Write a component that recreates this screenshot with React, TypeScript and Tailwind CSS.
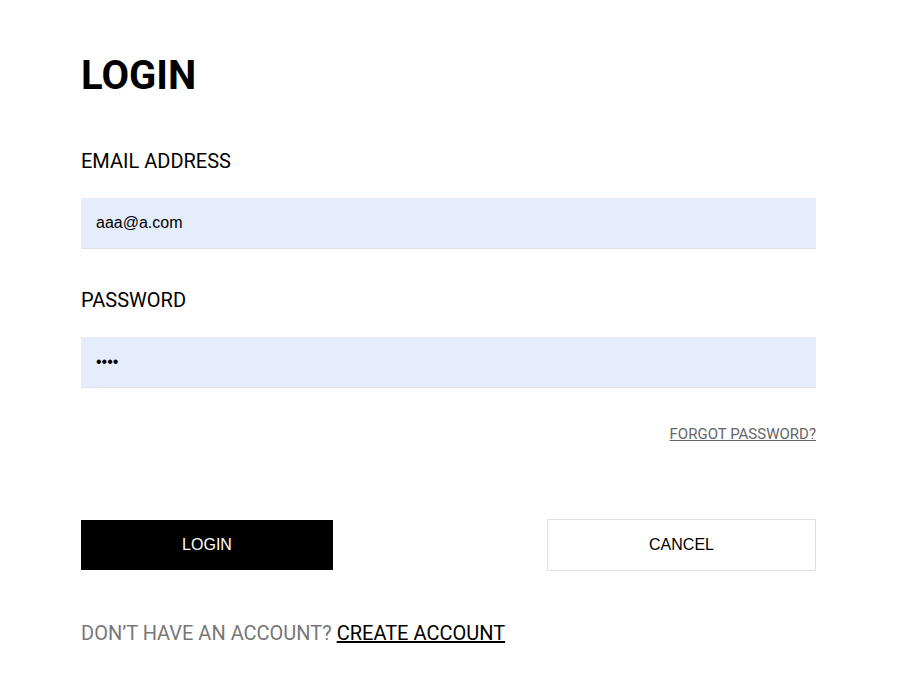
export default function App() {
  return (
    <div className="min-h-[698px] bg-white font-['Roboto',sans-serif]">
      <div className="ml-[81px] w-[735px] pt-[52px]">
        <h1 className="text-[40px] font-bold leading-[48px] text-black">LOGIN</h1>

        <form className="mt-[49px]" onSubmit={(e) => e.preventDefault()}>
          <label className="block text-[20px] leading-[24px] text-black">EMAIL ADDRESS</label>
          <input
            type="email"
            defaultValue="aaa@a.com"
            className="mt-[25px] block h-[51px] w-full border-b border-[#e2e2e2] bg-[#e5edfc] px-[15px] font-['Liberation_Sans',sans-serif] text-[16px] text-black outline-none"
          />

          <label className="mt-[39px] block text-[20px] leading-[24px] text-black">PASSWORD</label>
          <input
            type="password"
            defaultValue="aaaa"
            className="mt-[25px] block h-[51px] w-full border-b border-[#e2e2e2] bg-[#e5edfc] px-[15px] font-['Liberation_Sans',sans-serif] text-[16px] text-black outline-none"
          />

          <div className="mt-[38px] flex justify-end">
            <a href="#" className="text-[15px] leading-[17px] text-[#666] underline">
              FORGOT PASSWORD?
            </a>
          </div>

          <div className="mt-[76px] flex items-center justify-between">
            <button
              type="submit"
              className="h-[50px] w-[252px] bg-black font-['Liberation_Sans',sans-serif] text-[16px] text-white"
            >
              LOGIN
            </button>
            <button
              type="button"
              className="h-[52px] w-[269px] border border-[#e0e0e0] bg-white font-['Liberation_Sans',sans-serif] text-[16px] text-black"
            >
              CANCEL
            </button>
          </div>
        </form>

        <p className="mt-[50px] text-[20px] leading-[24px] text-[#777]">
          DON’T HAVE AN ACCOUNT?{" "}
          <a href="#" className="text-black underline">
            CREATE ACCOUNT
          </a>
        </p>
      </div>
    </div>
  );
}
